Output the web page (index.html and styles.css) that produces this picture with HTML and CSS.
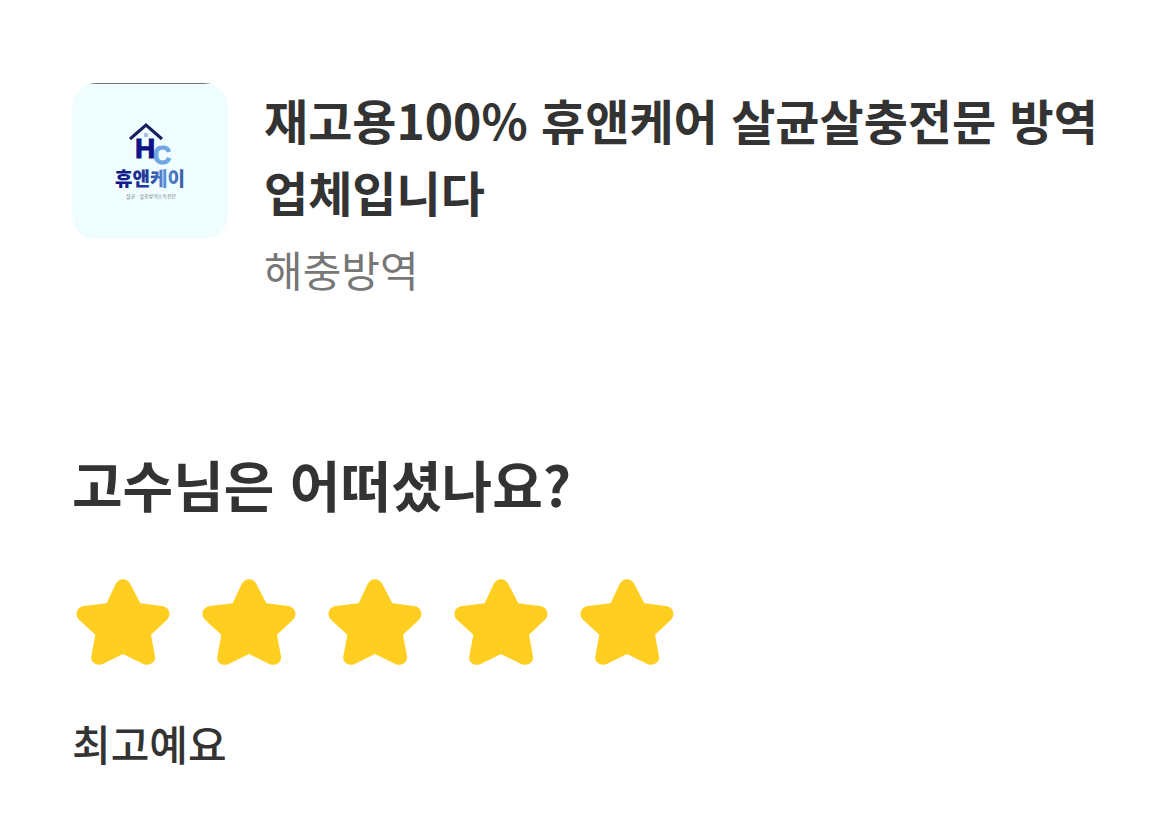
FILE: index.html
```html
<!DOCTYPE html>
<html lang="ko">
<head>
<meta charset="utf-8">
<meta name="viewport" content="width=device-width, initial-scale=1">
<title>고수 리뷰</title>
<link rel="stylesheet" href="styles.css">
</head>
<body>
<svg class="defs" width="0" height="0" aria-hidden="true">
  <symbol id="star" viewBox="36 24 306 306">
    <path d="M167 57C176 38 202 38 211 57L241 115L306 123C327 125 336 149 321 164L273 209L285 274C288 293 268 305 250 297L189 267L128 297C110 305 91 293 94 274L106 209L57 164C42 149 51 125 72 123L140 115Z"/>
  </symbol>
</svg>
<main class="review">
  <header class="provider">
    <svg class="provider-logo" viewBox="0 0 156 156" role="img" aria-label="휴앤케어 로고">
      <defs>
        <linearGradient id="brand" x1="0" x2="1" y1="0" y2="0">
          <stop offset="0" stop-color="#0b1182"/>
          <stop offset="0.5" stop-color="#26419f"/>
          <stop offset="0.7" stop-color="#5c90d8"/>
          <stop offset="1" stop-color="#375b9f"/>
        </linearGradient>
      </defs>
      <rect width="156" height="156" fill="#effdff"/>
      <path d="M0 0H156V1H0Z" fill="#77777f"/>
      <text class="logo-c" x="81" y="81">C</text>
      <path d="M58 56L74 42L90 56" fill="none" stroke="#17205f" stroke-width="3"/>
      <path d="M72 50h4v4h-4z" fill="#a9bfe5"/>
      <text class="logo-h" x="63" y="75">H</text>
      <text class="logo-name" x="43" y="103" fill="url(#brand)">휴앤케이</text>
      <text class="logo-tag" x="54" y="115">살균 · 살충방역소독전문</text>
    </svg>
    <div class="provider-info">
      <h1 class="provider-name">재고용100% 휴앤케어 살균살충전문 방역업체입니다</h1>
      <p class="provider-service">해충방역</p>
    </div>
  </header>
  <form class="rating">
    <h2 class="rating-title">고수님은 어떠셨나요?</h2>
    <div class="stars" role="radiogroup" aria-label="별점">
      <label class="star"><input type="radio" name="score" value="1" aria-label="1점"><svg class="star-icon"><use href="#star"/></svg></label>
      <label class="star"><input type="radio" name="score" value="2" aria-label="2점"><svg class="star-icon"><use href="#star"/></svg></label>
      <label class="star"><input type="radio" name="score" value="3" aria-label="3점"><svg class="star-icon"><use href="#star"/></svg></label>
      <label class="star"><input type="radio" name="score" value="4" aria-label="4점"><svg class="star-icon"><use href="#star"/></svg></label>
      <label class="star"><input type="radio" name="score" value="5" aria-label="5점" checked><svg class="star-icon"><use href="#star"/></svg></label>
    </div>
    <p class="rating-label">최고예요</p>
  </form>
</main>
</body>
</html>
```
FILE: styles.css
```css
* { box-sizing: border-box; }
body {
  margin: 0;
  background: #fff;
  color: #333;
  font-family: "Noto Sans CJK KR", sans-serif;
}
h1, h2, p { margin: 0; }
.defs { position: absolute; }
.review { padding: 83px 72px 48px; }
.provider {
  display: flex;
  align-items: flex-start;
  gap: 36px;
}
.provider-logo {
  flex: none;
  width: 156px;
  height: 156px;
  border-radius: 24px;
}
.logo-h, .logo-c {
  font-family: "Liberation Sans", sans-serif;
  font-weight: 700;
  stroke-width: 1px;
}
.logo-h { font-size: 28px; fill: #0c1185; stroke: #0c1185; }
.logo-c { font-size: 25px; fill: #6fa5e2; stroke: #6fa5e2; }
.logo-name { font-size: 19px; font-weight: 900; }
.logo-tag { font-size: 5px; fill: #777f86; }
.provider-info { flex: 1; min-width: 0; }
.provider-name {
  font-size: 48px;
  font-weight: 700;
  line-height: 72px;
}
.provider-service {
  margin-top: 12px;
  font-size: 42px;
  line-height: 60px;
  color: #777;
}
.rating { margin-top: 144px; }
.rating-title {
  font-size: 55px;
  font-weight: 700;
  line-height: 80px;
}
.stars {
  display: flex;
  gap: 24px;
  margin-top: 50px;
}
.star { display: block; cursor: pointer; }
.star input {
  position: absolute;
  opacity: 0;
}
.star-icon {
  display: block;
  width: 102px;
  height: 102px;
  fill: #ffce21;
}
.rating-label {
  margin-top: 38px;
  font-size: 42px;
  font-weight: 500;
  line-height: 60px;
}
```
